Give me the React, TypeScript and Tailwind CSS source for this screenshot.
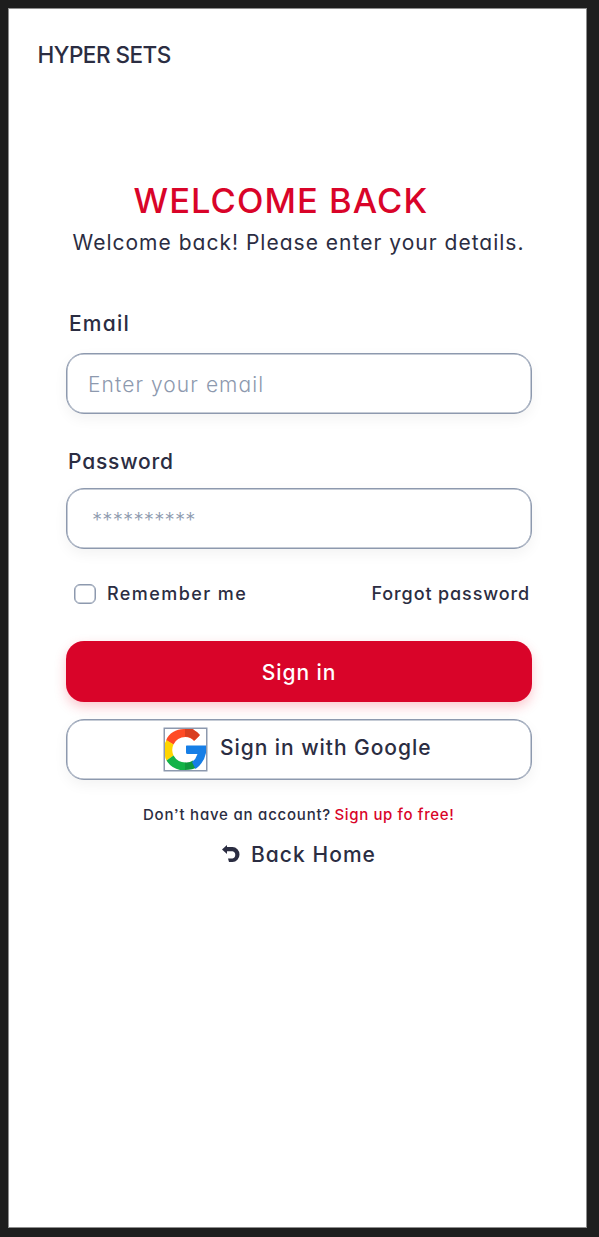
import type { ReactNode } from "react";

function Field({ label, labelClass, className, children }: { label: string; labelClass: string; className: string; children: ReactNode }) {
  return (
    <label className={`flex flex-col ${className}`}>
      <span className={`ml-0.5 h-6 whitespace-nowrap text-[21px] leading-6 font-medium ${labelClass}`}>{label}</span>
      {children}
    </label>
  );
}

function GoogleLogo() {
  return (
    <svg className="h-full w-full" viewBox="0 0 41 41">
      <path fill="#ff4b26" d="M1 11.500C4 4 11 0 19 0H28L34.500 6.500L29 12Q25.500 8 20.500 8Q12 8 8.500 15.500Z" />
      <path fill="#d93f21" d="M20 0H27Q31.500 2 35 6L29.500 11.500Q25.500 7.500 20 7.500Z" />
      <path fill="#ffd500" d="M1.500 11L8.500 15.500Q6 20.500 8.500 26.500L1.500 31.500Q0 29.500 0 27V14Z" />
      <path fill="#12b347" d="M1.500 31.500L8.500 26.500Q12.500 33.500 20.500 33.500V41H15Q6 39 1.500 31.500Z" />
      <path fill="#0f993e" d="M20 33.500Q24.500 34 28 31.500L32.500 38Q28 41 20 41Z" />
      <path fill="#167ee6" d="M21.500 16.500H41V24Q39 34 30.500 40L27 33Q31 30 32.500 25H22.500Q21 25 21 23.500V17Z" />
    </svg>
  );
}

export default function App() {
  return (
    <div className="h-[1237px] w-[599px] bg-[#1e1e1e] pt-2 pl-2 font-['Inter',sans-serif] text-[#2b2d42] [font-feature-settings:'cv11','ss03']">
      <main className="h-[1220px] w-[579px] border border-[#8e8e8e] bg-white">
        <header className="pt-[34px] pl-[28.500px] text-[22.500px] leading-6 font-medium tracking-[-0.500px]">HYPER SETS</header>

        <section className="ml-[57px] flex w-[466px] flex-col pt-[114px]">
          <h1 className="ml-[67.500px] h-10 whitespace-nowrap text-[34.500px] leading-10 font-medium tracking-[1.050px] text-[#d90429]">WELCOME BACK</h1>
          <p className="ml-[6.500px] mt-[10px] h-6 whitespace-nowrap text-[21px] leading-6 tracking-[1.010px]">Welcome back! Please enter your details.</p>

          <Field label="Email" labelClass="pl-px tracking-[1.200px]" className="mt-[57px]">
            <input placeholder="Enter your email" className="mt-[17px] h-[61px] rounded-[18px] border border-[#8d99ae] bg-white px-[21px] pt-0.5 text-[21px] font-light tracking-[1.070px] shadow-[inset_0_0_0_0.500px_#8d99ae,0_5px_14px_rgba(0,0,0,0.05)] outline-none placeholder:text-[#8d99ae]" />
          </Field>
          <Field label="Password" labelClass="tracking-[0.800px]" className="mt-[36px]">
            <input type="text" placeholder="**********" className="mt-[14px] h-[61px] rounded-[18px] border border-[#8d99ae] bg-white px-[25px] pt-px text-[20.500px] font-light tracking-[0.100px] shadow-[inset_0_0_0_0.500px_#8d99ae,0_5px_14px_rgba(0,0,0,0.05)] outline-none placeholder:text-[#8d99ae]" />
          </Field>

          <div className="mt-[33px] flex h-6 items-center pr-0.5 pl-2 text-[18px] leading-6 font-medium whitespace-nowrap">
            <input type="checkbox" className="h-5 w-[22px] appearance-none rounded-md border border-[#8d99ae] shadow-[inset_0_0_0_0.500px_#8d99ae]" />
            <span className="ml-[11px] tracking-[1.430px]">Remember me</span>
            <a className="ml-auto tracking-[0.880px]">Forgot password</a>
          </div>

          <button className="mt-[35px] h-[61px] rounded-[18px] bg-[#d90429] pt-[3px] text-[21px] font-medium tracking-[0.950px] text-white shadow-[0_5px_12px_rgba(239,35,60,0.25)]">Sign in</button>
          <button className="mt-[17px] flex h-[61px] items-center rounded-[18px] border border-[#8d99ae] bg-white pl-[97px] text-[21px] font-medium tracking-[0.950px] whitespace-nowrap shadow-[inset_0_0_0_0.500px_#8d99ae,0_5px_14px_rgba(0,0,0,0.05)]">
            <span className="h-[43px] w-[43px] border border-[#8d99ae] shadow-[0_0_0_0.500px_#8d99ae]"><GoogleLogo /></span>
            <span className="-mt-[3px] ml-[13px]">Sign in with Google</span>
          </button>

          <p className="mt-[23px] ml-[77px] flex h-6 text-[15px] leading-6 font-medium whitespace-nowrap">
            <span className="w-[191.500px] tracking-[0.780px]">Don’t have an account?</span>
            <a className="tracking-[0.630px] text-[#d90429]">Sign up fo free!</a>
          </p>
          <a className="mt-4 ml-[156px] flex h-6 items-start text-[21px] leading-6 font-medium tracking-[1.050px] whitespace-nowrap">
            <svg className="mt-[2px] h-[18px] w-[18px]" viewBox="0 0 18 18">
              <path d="M0 4.500L5 0V2H10.500A7 7.500 0 0 1 10.500 17H7L6 13.500H10.500A3.300 3.700 0 0 0 10.500 6.200H5V9Z" fill="#2b2d42" />
            </svg>
            <span className="ml-[11px]">Back Home</span>
          </a>
        </section>
      </main>
    </div>
  );
}
